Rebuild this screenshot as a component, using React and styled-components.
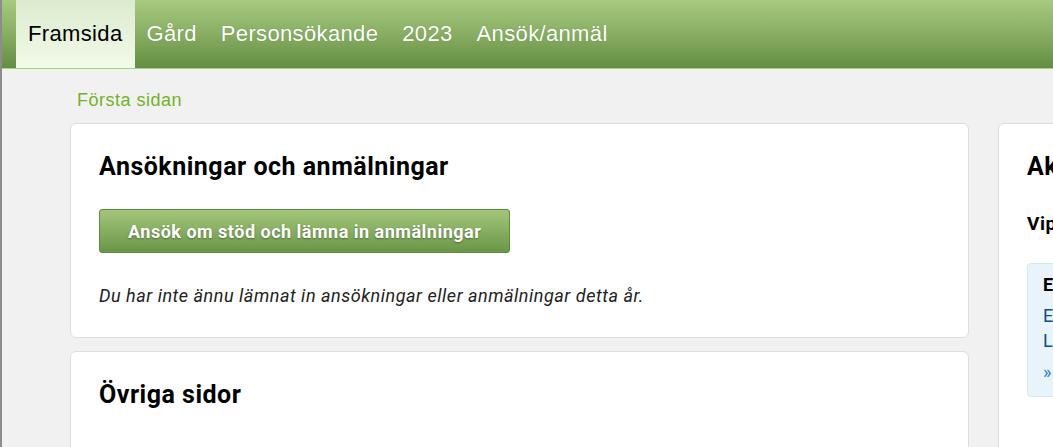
import React from "react";
import styled, { createGlobalStyle } from "styled-components";

const GlobalStyle = createGlobalStyle`
  html, body {
    margin: 0;
    padding: 0;
    background: #f1f1f1;
    overflow: hidden;
  }
  body {
    font-family: Roboto, "Liberation Sans", Arial, sans-serif;
    color: #111;
  }
`;

const tabs = ["Framsida", "Gård", "Personsökande", "2023", "Ansök/anmäl"];

export default function App() {
  return (
    <>
      <GlobalStyle />
      <Page>
        <NavBar>
          {tabs.map((t, i) => (
            <Tab key={t} $active={i === 0}>
              {t}
            </Tab>
          ))}
        </NavBar>
        <Main>
          <Breadcrumb>Första sidan</Breadcrumb>
          <Columns>
            <LeftColumn>
              <Card>
                <Heading>Ansökningar och anmälningar</Heading>
                <Button>Ansök om stöd och lämna in anmälningar</Button>
                <Note>Du har inte ännu lämnat in ansökningar eller anmälningar detta år.</Note>
              </Card>
              <Card>
                <Heading>Övriga sidor</Heading>
              </Card>
            </LeftColumn>
            <SideCard>
              <Heading>Aktuellt</Heading>
              <SubHeading>Viptjänster</SubHeading>
              <InfoBox>
                <InfoTitle>Ett nytt meddelande</InfoTitle>
                <InfoLink>Ett nytt system för stöd</InfoLink>
                <InfoLink>Läs mer om ändringarna</InfoLink>
                <MoreLink>» Läs mer</MoreLink>
              </InfoBox>
            </SideCard>
          </Columns>
        </Main>
      </Page>
    </>
  );
}

const Page = styled.div`
  min-height: 447px;
  border-left: 2px solid #8c8c8c;
`;

const NavBar = styled.nav`
  display: flex;
  height: 68px;
  padding-left: 14px;
  background: linear-gradient(to bottom, #a7c980 0%, #88ad63 50%, #638e42 100%);
  border-bottom: 1px solid #a9d27e;
`;

const Tab = styled.div`
  display: flex;
  align-items: center;
  padding: 0 12px 1px;
  font-family: "Liberation Sans", Arial, sans-serif;
  font-size: 22px;
  letter-spacing: 0.35px;
  color: ${(p) => (p.$active ? "#000" : "#fff")};
  background: ${(p) =>
    p.$active ? "linear-gradient(to bottom, #dcebcf, #f1fbe9)" : "transparent"};
  text-shadow: ${(p) => (p.$active ? "none" : "0 0 1px rgba(40, 70, 20, 0.35)")};
`;

const Main = styled.main`
  padding-left: 68px;
`;

const Breadcrumb = styled.div`
  padding: 21px 0 0 7px;
  height: 33px;
  font-family: "Liberation Sans", Arial, sans-serif;
  font-size: 18px;
  letter-spacing: 0.5px;
  color: #72b12a;
`;

const Columns = styled.div`
  display: grid;
  grid-template-columns: 899px 400px;
  gap: 29px;
  align-items: start;
`;

const LeftColumn = styled.div`
  display: flex;
  flex-direction: column;
  gap: 13px;
`;

const Card = styled.section`
  background: #fff;
  border: 1px solid #dedede;
  border-radius: 6px;
  padding: 28px 28px 29px;
  min-height: 100px;
`;

const SideCard = styled(Card)`
  min-height: 330px;
`;

const Heading = styled.h2`
  margin: 0;
  font-size: 25px;
  line-height: 29px;
  letter-spacing: 0.5px;
  font-weight: 700;
  color: #000;
`;

const SubHeading = styled.h3`
  margin: 31px 0 0;
  font-size: 19px;
  line-height: 1.3;
  letter-spacing: 0.5px;
  font-weight: 700;
  color: #000;
`;

const Button = styled.button`
  display: block;
  margin-top: 28px;
  height: 44px;
  padding: 0 28px;
  font-family: Roboto, sans-serif;
  font-size: 18px;
  font-weight: 700;
  letter-spacing: 0.5px;
  color: #fff;
  text-shadow: 0 1px 2px rgba(0, 0, 0, 0.35);
  background: linear-gradient(to bottom, #a3c67b, #6a9648);
  border: 1px solid #5f8b3d;
  border-radius: 3px;
  cursor: pointer;
`;

const Note = styled.p`
  margin: 30px 0 0;
  font-size: 18px;
  line-height: 25px;
  letter-spacing: 0.53px;
  font-style: italic;
  color: #222;
`;

const InfoBox = styled.div`
  margin-top: 26px;
  padding: 9px 15px 12px;
  background: #e8f3fa;
  border: 1px solid #d5e8f4;
  border-radius: 4px;
`;

const InfoTitle = styled.div`
  font-size: 18px;
  font-weight: 700;
  line-height: 24px;
  letter-spacing: 0.5px;
  color: #000;
  margin-bottom: 6px;
`;

const InfoLink = styled.div`
  font-size: 18px;
  line-height: 25px;
  letter-spacing: 0.5px;
  color: #0b4f8a;
`;

const MoreLink = styled.div`
  margin-top: 6px;
  font-size: 18px;
  line-height: 25px;
  color: #2a7fd4;
`;
